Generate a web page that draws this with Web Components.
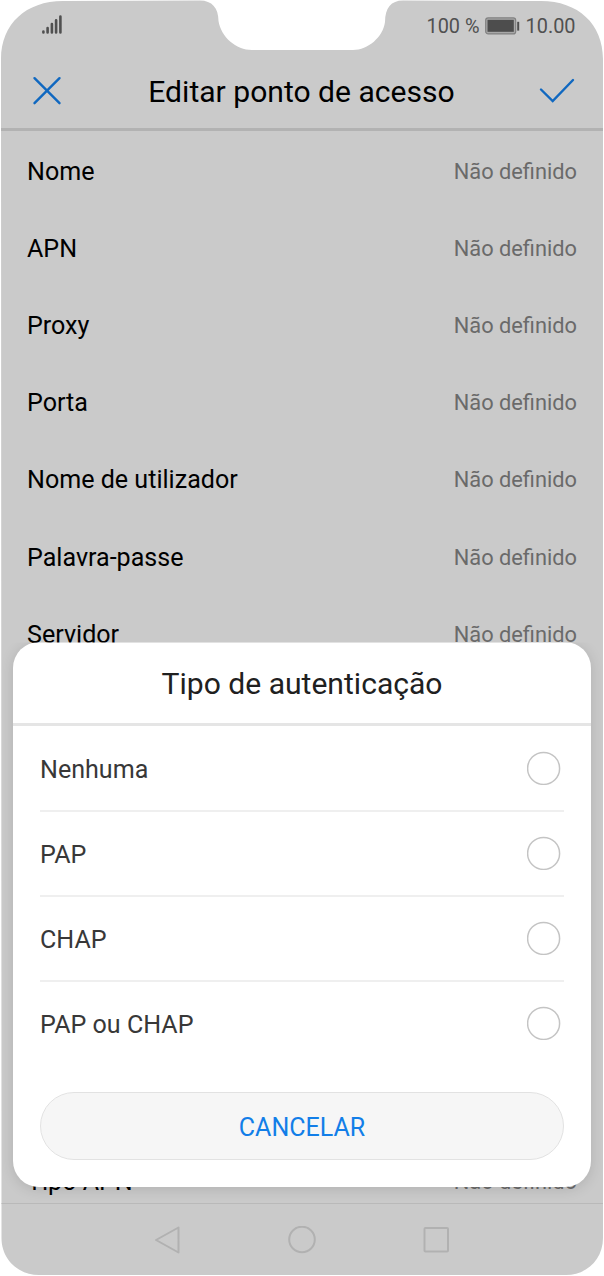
<!DOCTYPE html>
<html lang="pt">
<head>
<meta charset="utf-8">
<title>Editar ponto de acesso</title>
<style>
html,body{margin:0;background:#fff}
body{font-family:Roboto,sans-serif;width:604px;height:1276px;overflow:hidden}
</style>
</head>
<body>
<phone-screen>
  <status-bar slot="top"></status-bar>
  <title-bar slot="top">Editar ponto de acesso</title-bar>
  <setting-row value="Não definido">Nome</setting-row>
  <setting-row value="Não definido">APN</setting-row>
  <setting-row value="Não definido">Proxy</setting-row>
  <setting-row value="Não definido">Porta</setting-row>
  <setting-row value="Não definido">Nome de utilizador</setting-row>
  <setting-row value="Não definido">Palavra-passe</setting-row>
  <setting-row value="Não definido">Servidor</setting-row>
  <setting-row class="last" value="Não definido">Tipo APN</setting-row>
  <nav-bar slot="bottom"></nav-bar>
  <choice-dialog slot="overlay" heading="Tipo de autenticação" cancel="CANCELAR">
    <choice-row>Nenhuma</choice-row>
    <choice-row>PAP</choice-row>
    <choice-row>CHAP</choice-row>
    <choice-row>PAP ou CHAP</choice-row>
  </choice-dialog>
</phone-screen>
<script>
const define = (name, html, setup) => customElements.define(name, class extends HTMLElement {
  constructor() {
    super();
    this.attachShadow({ mode: 'open' }).innerHTML = html;
  }
  connectedCallback() {
    if (setup) setup(this, this.shadowRoot);
  }
});

define('phone-screen', `<style>
:host{display:flex;flex-direction:column;position:relative;box-sizing:border-box;width:604px;height:1276px;background:#cacaca;
clip-path:path("M1 59C1 24 26 1 63 1L200 .5C212 .5 218.500 8 218.500 21C221 37 236 50 252 50H353C368 50 383 37 385 22C385 8 391 .5 403 .5L541 1C578 1 603 24 603 59V1238C603 1259 587 1275 566 1275H39C18 1275 1.500 1259 1.500 1238Z")}
main{flex:1;min-height:0;display:flex;flex-direction:column;overflow:hidden;padding-top:1px}
::slotted(.last){margin-top:auto;margin-bottom:-17px}
</style><slot name="top"></slot><main><slot></slot></main><slot name="bottom"></slot><slot name="overlay"></slot>`);

define('status-bar', `<style>
:host{display:flex;align-items:center;height:53px;padding:0 28.500px 1px 41.500px;box-sizing:border-box;color:#505050;font-size:19.900px}
span{line-height:24px;padding-top:2px}
.sig{margin-right:auto}
svg{display:block}
</style>
<svg class="sig" width="21" height="22" viewBox="0 0 21 22" stroke="#505050" stroke-width="2.600" stroke-linecap="round"><path d="M1.400 17.500v-1M5.600 17.500v-4.500M9.900 17.500v-8.500M14.100 17.500V5.200M18.400 17.500V1.500"/></svg>
<span class="pct">100 %</span>
<svg style="margin:0 6px 0 5px" width="35" height="18" viewBox="0 0 35 18"><rect x=".7" y=".9" width="30" height="16" rx="2.500" fill="#a8a8a8" stroke="#808080" stroke-width="1.200"/><rect x="2.500" y="2.800" width="26.300" height="12" fill="#4d4d4d"/><rect x="32.200" y="4.800" width="2" height="8.800" fill="#505050"/></svg>
<span class="time">10.00</span>`);

define('title-bar', `<style>
:host{display:flex;align-items:center;justify-content:space-between;height:78px;box-sizing:border-box;border-bottom:3px solid #b2b2b2;padding:0 29px 0 32px;font-size:30.080px;color:#000}
h1{margin:2px 0 0 2px;font:inherit;font-weight:400;line-height:36px;white-space:nowrap}
svg{display:block}
</style>
<svg width="30" height="30" viewBox="0 0 30 30" fill="none" stroke="#1068c0" stroke-width="2.400" stroke-linecap="round"><path d="M2.500 2.200l25 25M27.500 2.200l-25 25"/></svg>
<h1><slot></slot></h1>
<svg width="36" height="26" viewBox="0 0 36 26" fill="none" stroke="#1068c0" stroke-width="2.400" stroke-linecap="round"><path d="M2 11.500l11.700 11.500L34 2"/></svg>`);

define('setting-row', `<style>
:host{display:flex;flex:none;align-items:center;justify-content:space-between;height:77.200px;padding:1px 27px 0;box-sizing:border-box;font-size:25.080px;color:#000}
.v{font-size:21.800px;color:#6a6a6a}
</style><span><slot></slot></span><span class="v"></span>`,
(el, root) => { root.querySelector('.v').textContent = el.getAttribute('value'); });

define('nav-bar', `<style>
:host{display:flex;flex:none;justify-content:center;align-items:center;gap:107px;height:73px;box-sizing:border-box;border-top:1px solid #b9b9b9}
svg{display:block}
</style>
<svg width="28" height="28" viewBox="0 0 28 28" fill="none" stroke="#b1b1b1" stroke-width="2" stroke-linejoin="round"><path d="M25.500 1.500V26.500L3 14Z"/></svg>
<svg width="28" height="28" viewBox="0 0 28 28" fill="none" stroke="#b1b1b1" stroke-width="2"><circle cx="14" cy="13.500" r="12.800"/></svg>
<svg width="28" height="28" viewBox="0 0 28 28" fill="none" stroke="#b1b1b1" stroke-width="2"><rect x="1.500" y="2" width="23.500" height="23.500" rx="1"/></svg>`);

define('choice-dialog', `<style>
:host{position:absolute;left:13px;top:642px;width:578px;height:545px;box-sizing:border-box;background:#fff;border-radius:26px;box-shadow:0 2px 14px rgba(0,0,0,.13);display:flex;flex-direction:column;clip-path:inset(.5px -30px -30px -30px)}
h2{margin:0;height:84px;box-sizing:border-box;border-bottom:3px solid #e5e5e5;font-size:30.080px;font-weight:400;line-height:84px;text-align:center;color:#202020}
.list{padding:0 27px}
button{margin:26px 27px 0;height:68px;border:1px solid #e2e2e2;border-radius:34px;background:#f6f6f6;color:#127ee8;font:25px Roboto,sans-serif;padding:2px 0 0}
::slotted(choice-row:last-child){border-bottom-color:transparent}
</style><h2></h2><div class="list"><slot></slot></div><button></button>`,
(el, root) => {
  root.querySelector('h2').textContent = el.getAttribute('heading');
  root.querySelector('button').textContent = el.getAttribute('cancel');
});

define('choice-row', `<style>
:host{display:flex;align-items:center;justify-content:space-between;height:85px;box-sizing:border-box;border-bottom:2px solid #efefef;padding-right:3.500px;font-size:25.080px;color:#383838;position:relative;top:.5px}
span{padding-top:2px}
svg{display:block}
</style><span><slot></slot></span><svg width="34" height="34" viewBox="0 0 34 34"><circle cx="16.600" cy="17.400" r="16" fill="none" stroke="#c4c4c4" stroke-width="1.500"/></svg>`);
</script>
</body>
</html>
